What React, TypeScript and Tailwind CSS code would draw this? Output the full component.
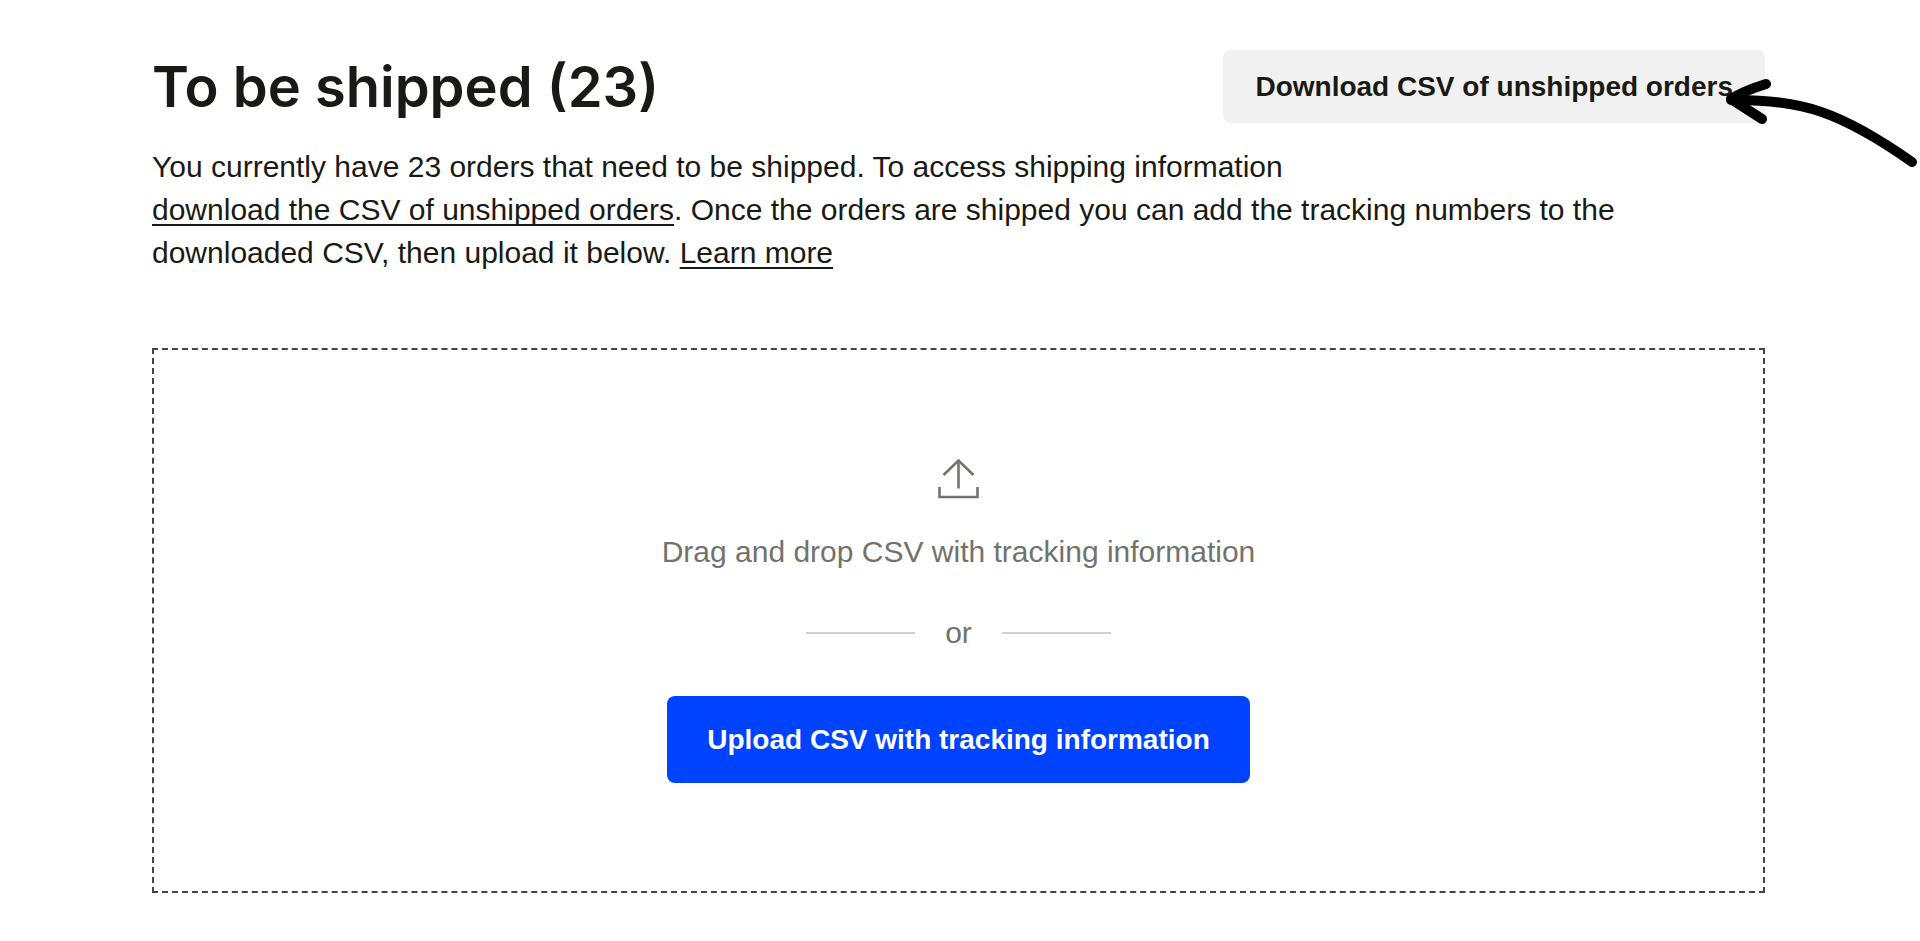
import React from "react";

const UploadIcon = () => {
  return (
    <svg
      className="h-10 w-10 overflow-visible"
      viewBox="0 0 40 40"
      fill="none"
      stroke="currentColor"
      strokeWidth="2.6"
      aria-hidden="true"
    >
      <path d="M19.5 30.5V2.5" />
      <path d="M4.5 17 19.5 2.5 34.5 17" />
      <path d="M0.5 29v10h38V29" />
    </svg>
  );
};

const HandDrawnArrow = () => {
  return (
    <svg
      className="pointer-events-none absolute top-7 left-[calc(100%-42px)] h-[92px] w-[196px]"
      viewBox="0 0 196 92"
      fill="none"
      stroke="#000"
      strokeLinecap="round"
      strokeLinejoin="round"
      aria-hidden="true"
    >
      <path d="M189 84C118 34 78 21 8 22" strokeWidth="10" />
      <path d="M43 6C30 10 19 14 8 21L39 41" strokeWidth="10" />
    </svg>
  );
};

const App = () => {
  return (
    <main className="min-h-screen overflow-x-hidden bg-white pt-[50px] pr-[155px] pb-12 pl-[152px] font-['Liberation_Sans',sans-serif] text-[30px] leading-[43px] text-[#191a14]">
      <header className="flex items-start justify-between">
        <h1 className="font-['Inter',sans-serif] text-[56px] leading-[74px] font-semibold">
          To be shipped (23)
        </h1>
        <div className="relative">
          <button
            type="button"
            className="h-[73px] rounded-lg bg-[#f1f1f1] px-8 text-[28px] font-bold"
          >
            Download CSV of unshipped orders
          </button>
          <HandDrawnArrow />
        </div>
      </header>

      <p className="mt-[21px] max-w-[1500px]">
        You currently have 23 orders that need to be shipped. To access shipping
        information
        <br />
        <a
          href="#download"
          className="underline decoration-2 underline-offset-4 [text-decoration-skip-ink:none]"
        >
          download the CSV of unshipped orders
        </a>
        . Once the orders are shipped you can add the tracking numbers to the
        downloaded CSV, then upload it below.{" "}
        <a
          href="#learn-more"
          className="underline decoration-2 underline-offset-4 [text-decoration-skip-ink:none]"
        >
          Learn more
        </a>
      </p>

      <section className="mt-[74px] flex flex-col items-center border-2 border-dashed border-[#444] pt-[108px] pb-[108px] text-[#72736b]">
        <UploadIcon />
        <p className="mt-8">Drag and drop CSV with tracking information</p>

        <div className="mt-[38px] flex items-center gap-[30px]">
          <span className="h-[2px] w-[109px] bg-[#d0d0ce]" />
          <span>or</span>
          <span className="h-[2px] w-[109px] bg-[#d0d0ce]" />
        </div>

        <button
          type="button"
          className="mt-[42px] h-[87px] rounded-lg bg-[#0043ff] px-10 text-[28px] font-bold text-white"
        >
          Upload CSV with tracking information
        </button>
      </section>
    </main>
  );
};

export default App;
